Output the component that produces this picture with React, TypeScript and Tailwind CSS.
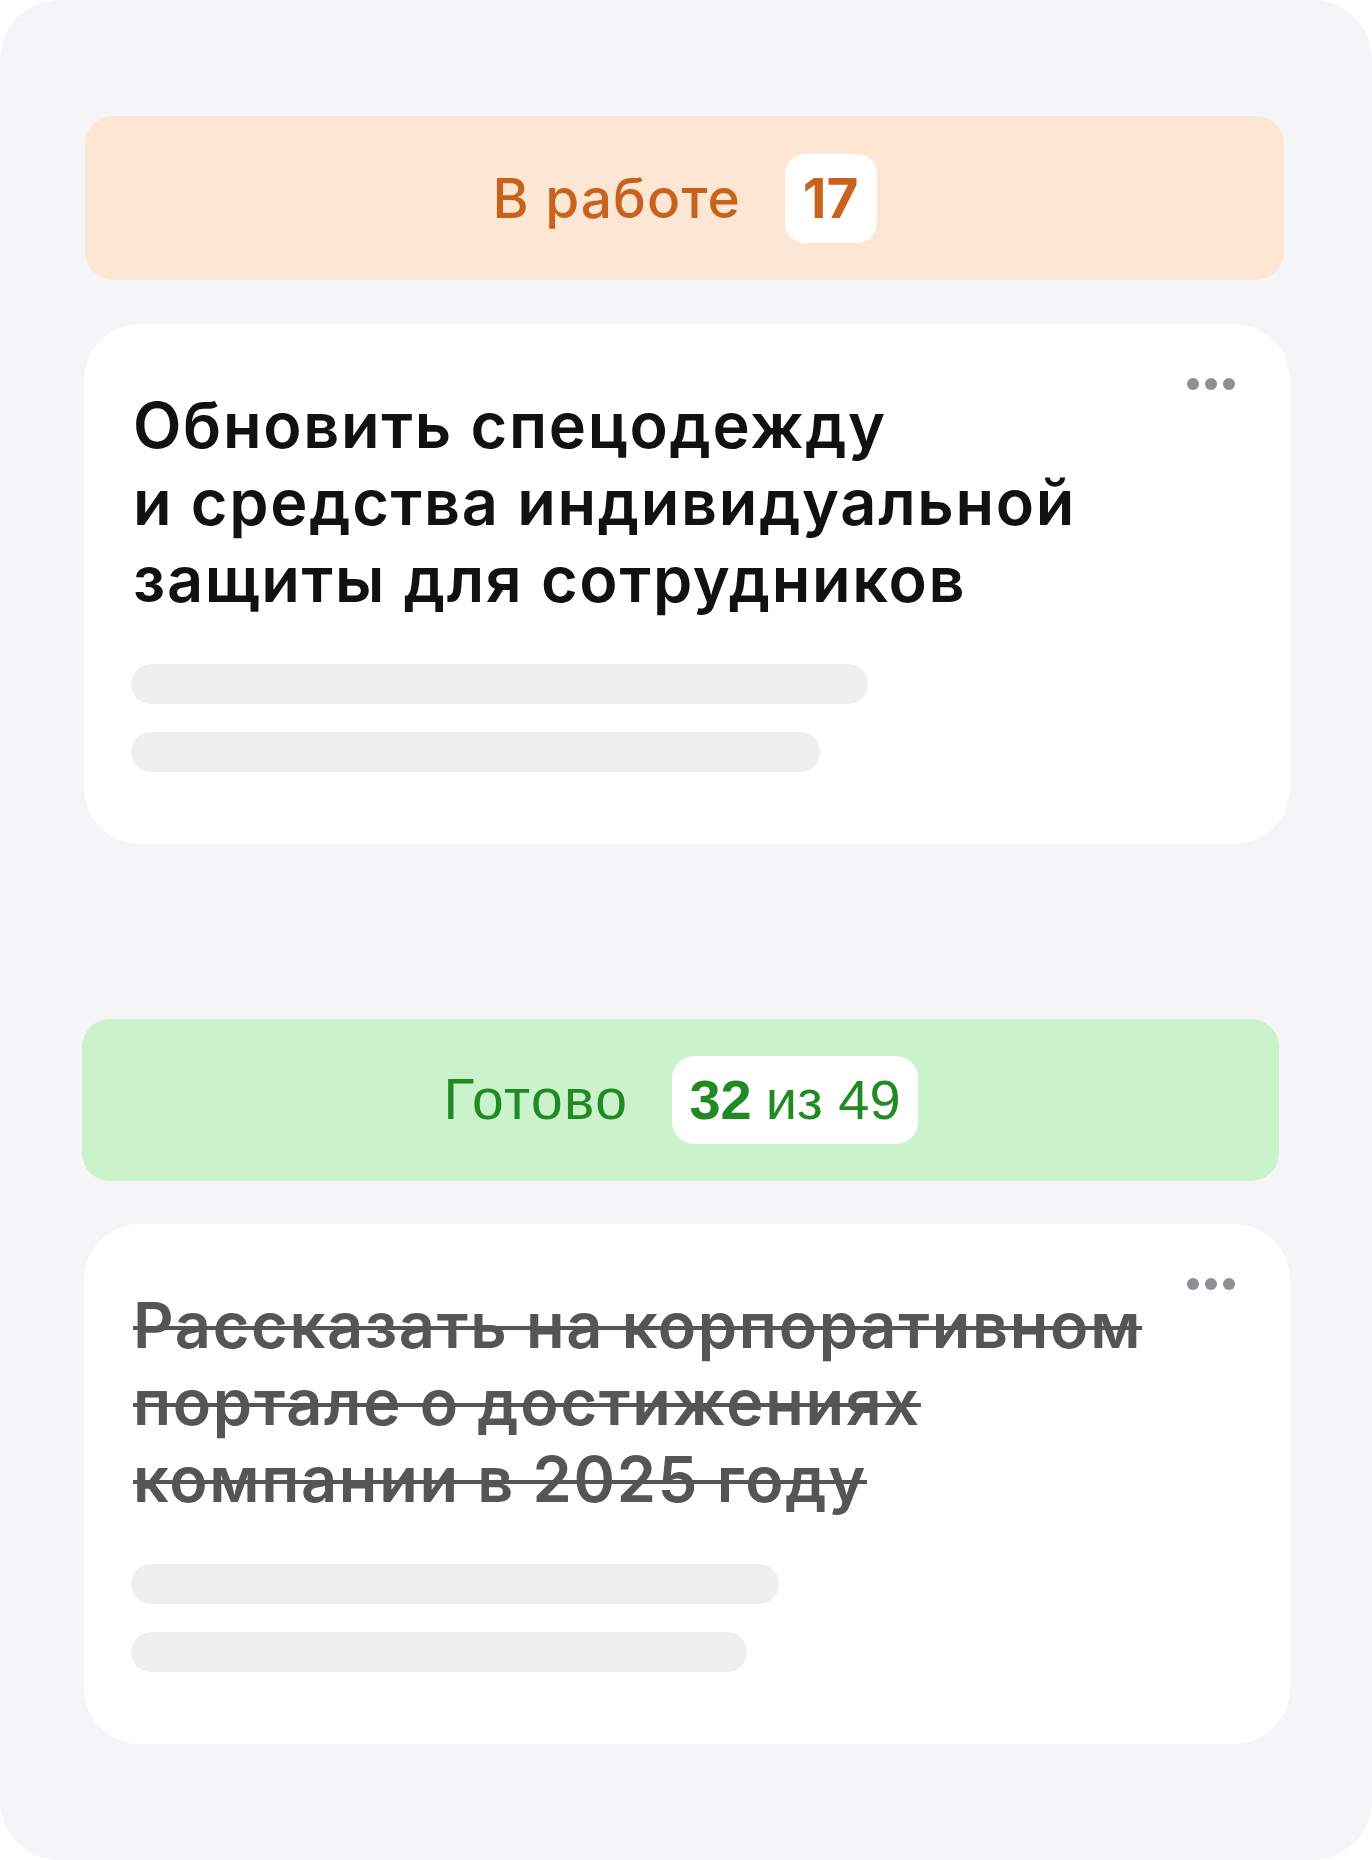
import type { ReactNode } from "react";

const sans = { fontFamily: "Inter, 'Noto Sans', sans-serif" };
const arial = { fontFamily: "'Liberation Sans', Arial, sans-serif" };

function MoreDots() {
  return (
    <button className="absolute top-[54px] right-[55px] flex items-center gap-[6px] p-0">
      <span className="block h-[12px] w-[12px] rounded-full bg-[#8e8e93]" />
      <span className="block h-[12px] w-[12px] rounded-full bg-[#8e8e93]" />
      <span className="block h-[12px] w-[12px] rounded-full bg-[#8e8e93]" />
    </button>
  );
}

type TaskProps = {
  lines: string[];
  done?: boolean;
  bars: [string, string];
};

function TaskCard({ lines, done, bars }: TaskProps) {
  return (
    <div className="relative rounded-[56px] bg-white pt-[63px] pb-[72px] pl-[47px] pr-[60px]">
      <MoreDots />
      <h3
        style={sans}
        className={
          done
            ? "ml-[2px] text-[63px] leading-[77px] font-semibold tracking-[1.7px] text-[#555555] line-through decoration-[4px]"
            : "ml-[2px] text-[63px] leading-[77px] font-semibold tracking-[1.7px] text-[#111111]"
        }
      >
        {lines.map((l, i) => (
          <span key={i} className="block">
            {l}
          </span>
        ))}
      </h3>

      {/* placeholder rows */}
      <div className={`mt-[46px] h-[40px] rounded-full bg-[#efefef] ${bars[0]}`} />
      <div className={`mt-[28px] h-[40px] rounded-full bg-[#efefef] ${bars[1]}`} />
    </div>
  );
}

function Column({ className, children }: { className: string; children: ReactNode }) {
  return (
    <div className={`flex items-center justify-center rounded-[28px] ${className}`}>{children}</div>
  );
}

export default function App() {
  return (
    <div className="h-[1860px] w-[1372px] bg-white">
      <div className="h-full rounded-[60px] bg-[#f5f5f7] pt-[116px] pl-[84px] pr-[82px]">
        <div className="flex flex-col">
          {/* IN PROGRESS */}
          <Column className="ml-[1px] mr-[6px] h-[164px] gap-[44px] bg-[#fee6d5]">
            <span style={sans} className="text-[55px] font-medium tracking-[1px] text-[#c7631c]">
              В работе
            </span>
            <span
              style={sans}
              className="flex h-[89px] items-center rounded-[20px] bg-white px-[18px] text-[55px] font-bold text-[#c7631c]"
            >
              17
            </span>
          </Column>

          <div className="mt-[44px]">
            <TaskCard
              lines={["Обновить спецодежду", "и средства индивидуальной", "защиты для сотрудников"]}
              bars={["w-[737px]", "w-[689px]"]}
            />
          </div>

          {/* DONE */}
          <Column className="mt-[175px] ml-[-2px] mr-[11px] h-[162px] gap-[44px] bg-[#caf2cb]">
            <span style={arial} className="text-[57px] tracking-[1.5px] text-[#228a22]">
              Готово
            </span>
            <span
              style={arial}
              className="flex h-[88px] items-center gap-[14px] rounded-[22px] bg-white px-[17px] text-[56px] text-[#228a22]"
            >
              <b className="font-bold">32</b>
              <span>из 49</span>
            </span>
          </Column>

          <div className="mt-[43px]">
            <TaskCard
              done
              lines={["Рассказать на корпоративном", "портале о достижениях", "компании в 2025 году"]}
              bars={["w-[648px]", "w-[616px]"]}
            />
          </div>
        </div>
      </div>
    </div>
  );
}
